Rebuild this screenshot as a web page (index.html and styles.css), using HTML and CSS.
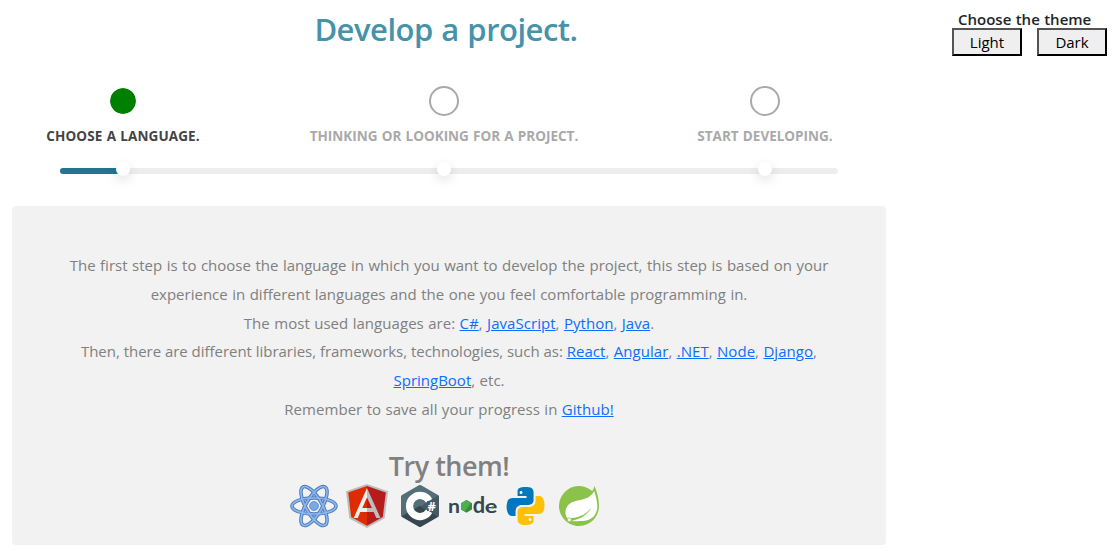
FILE: index.html
```html
<!DOCTYPE html>
<html lang="en">
<head>
<meta charset="utf-8">
<title>Develop a project</title>
<link rel="stylesheet" href="styles.css">
</head>
<body>
<main class="main">
  <h1 class="title"><span>Develop a project.</span></h1>
  <section class="stepper">
    <div class="track"><div class="fill"></div></div>
    <div class="step active"><i class="circle"></i><span class="label">CHOOSE A LANGUAGE.</span><i class="dot"></i></div>
    <div class="step"><i class="circle"></i><span class="label">THINKING OR LOOKING FOR A PROJECT.</span><i class="dot"></i></div>
    <div class="step"><i class="circle"></i><span class="label">START DEVELOPING.</span><i class="dot"></i></div>
  </section>
  <section class="panel">
    <p class="copy">
      <span class="wide">The first step is to choose the language in which you want to develop the project, this step is based on your</span><br>
      <span class="wide">experience in different languages and the one you feel comfortable programming in.</span><br>
      <span class="links">The most used languages are: <a href="#">C#</a>, <a href="#">JavaScript</a>, <a href="#">Python</a>, <a href="#">Java</a>.</span><br>
      <span class="tight">Then, there are different libraries, frameworks, technologies, such as: <span class="links"><a href="#">React</a>, <a href="#">Angular</a>, <a href="#">.NET</a>, <a href="#">Node</a>, <a href="#">Django</a>,</span></span><br>
      <span class="wide"><a href="#">SpringBoot</a>, etc.</span><br>
      <span class="links">Remember to save all your progress in <a href="#">Github!</a></span>
    </p>
    <h3 class="try"><span>Try them!</span></h3>
    <div class="icons">
      <svg viewBox="0 0 48 48"><g fill="none" stroke="#4e7ab5" stroke-width="3.6"><ellipse cx="24" cy="24" rx="22" ry="8"/><ellipse cx="24" cy="24" rx="22" ry="8" transform="rotate(60 24 24)"/><ellipse cx="24" cy="24" rx="22" ry="8" transform="rotate(120 24 24)"/></g><g fill="none" stroke="#8bb7f0" stroke-width="1.7"><ellipse cx="24" cy="24" rx="22" ry="8"/><ellipse cx="24" cy="24" rx="22" ry="8" transform="rotate(60 24 24)"/><ellipse cx="24" cy="24" rx="22" ry="8" transform="rotate(120 24 24)"/></g><circle cx="24" cy="24" r="4.5" fill="#7ba8e4" stroke="#5b88c6" stroke-width=".8"/></svg>
      <svg viewBox="0 0 48 48"><path fill="#bdbdbd" d="M23.9 2 3 9.3 6.3 36.4 24 46 41.7 36.3 45 9.2z"/><path fill="#b71c1c" d="M42.8 10.5 24 4.1V43.7L39.8 35z"/><path fill="#dd2c00" d="M24 4.1 5.2 10.6 8.2 35.1 24 43.7z"/><path fill="#bdbdbd" d="M24 6v9.5L28.9 26H24v4h6.7l2.6 6h4.2z"/><path fill="#eee" d="M24 26h-4.7L24 15.5V6L10.7 36h4l2.6-6H24z"/></svg>
      <svg viewBox="0 0 48 48"><path fill="#546e7a" d="M22.9 3.3a2.2 2.2 0 0 1 2.2 0L42 13q1 .6 1 1.9L24 24 5.5 34.5 5 33V15q0-1.400 1-2z"/><path fill="#37474f" d="m5.300 34.200 18.700-10.700 18.700 10.700-.7.900-16.900 9.600a2.200 2.200 0 0 1-2.200 0L6 35z"/><path fill="#455a64" d="M42.500 13.500q.5.600.5 1.500v18q0 .7-.5 1.500L24 24z"/><path d="M33.100 29.300A10.500 10.500 0 1 1 33.100 18.700" fill="none" stroke="#fff" stroke-width="7.200"/><path fill="#455a64" d="M31 19h12v10H31z"/><text class="sharp" x="31.600" y="28.700" textLength="9">#</text></svg>
      <svg viewBox="0 0 48 48"><text class="node" x="-1" y="30.500" textLength="12" lengthAdjust="spacingAndGlyphs">n</text><path fill="#388e3c" d="m17.500 18 5.500 3.200v6.300l-5.500 3.200-5.500-3.200v-6.300z"/><path fill="#4caf50" d="m17.500 18 4.500 2.600-6.400 9L12 27.500v-6.300z"/><text class="node d" x="23.800" y="30.500" textLength="12.400" lengthAdjust="spacingAndGlyphs">d</text><text class="node" x="35.700" y="30.500" textLength="12.600" lengthAdjust="spacingAndGlyphs">e</text><circle cx="43.700" cy="25.400" r="1.200" fill="#388e3c"/></svg>
      <svg viewBox="0 0 48 48"><path fill="#0277bd" d="M24.047,5c-1.555,0.005-2.633,0.142-3.936,0.367c-3.848,0.67-4.549,2.077-4.549,4.670V14h9v2H15.220h-4.350c-2.636,0-4.943,1.242-5.674,4.219c-0.826,3.417-0.863,5.557,0,9.125C5.851,32.005,7.294,34,9.931,34h3.632v-5.104c0-2.966,2.686-5.896,5.764-5.896h7.236c2.523,0,5-1.862,5-4.377v-8.586c0-2.439-1.759-4.263-4.218-4.672C27.406,5.359,25.589,4.994,24.047,5z M19.063,9c0.821,0,1.500,0.677,1.500,1.502c0,0.833-0.679,1.498-1.500,1.498c-0.837,0-1.500-0.664-1.500-1.498C17.563,9.680,18.226,9,19.063,9z"/><path fill="#ffc107" d="M23.078,43c1.555-0.005,2.633-0.142,3.936-0.367c3.848-0.670,4.549-2.077,4.549-4.670V34h-9v-2h9.343h4.350c2.636,0,4.943-1.242,5.674-4.219c0.826-3.417,0.863-5.557,0-9.125C41.274,15.995,39.831,14,37.194,14h-3.632v5.104c0,2.966-2.686,5.896-5.764,5.896h-7.236c-2.523,0-5,1.862-5,4.377v8.586c0,2.439,1.759,4.263,4.218,4.672C19.719,42.641,21.536,43.006,23.078,43z M28.063,39c-0.821,0-1.500-0.677-1.500-1.502c0-0.833,0.679-1.498,1.500-1.498c0.837,0,1.500,0.664,1.500,1.498C29.563,38.320,28.899,39,28.063,39z"/></svg>
      <svg viewBox="0 0 48 48"><path fill="#8bc34a" d="M39.500 4c1 3 4.500 10 4.500 20A20 20 0 1 1 37.200 9q1.500-2.200 2.300-5z"/><path fill="#fff" d="M39.200 9c1.800 6 4.600 14.500 2.300 20.500C39.300 36 34 38.600 27.500 39c-4.500.2-8 .2-11.500-.1 9-1.700 16.500-5.400 20.500-13.700C31 33 23 36.200 12.500 36.300 9 32 10 25 15 21.500c5-3.700 13-3 18.500-6.300q4-2.400 5.700-6.200z"/><circle cx="14.300" cy="37.700" r="2" fill="#fff" stroke="#8bc34a" stroke-width=".7"/></svg>
    </div>
  </section>
</main>
<aside class="theme">
  <div class="theme-title"><span>Choose the theme</span></div>
  <div class="buttons"><button>Light</button><button>Dark</button></div>
</aside>
</body>
</html>
```
FILE: styles.css
```css
* { box-sizing: border-box; }
body { margin: 0; width: 1112px; height: 551px; overflow: hidden; display: flex; background: #fff; font-family: "Open Sans", "Noto Sans", sans-serif; font-size: 15px; color: #212529; }
.main { width: 892px; flex: none; }
.title { margin: 0; padding-top: 8px; height: 86px; text-align: center; font-size: 31px; line-height: 43px; font-weight: 600; letter-spacing: -.5px; word-spacing: 1px; color: #4692ab; white-space: nowrap; }
.stepper { position: relative; width: 888px; height: 120px; display: grid; grid-template-columns: 246px 1fr 246px; }
.track { position: absolute; left: 60px; top: 82px; width: 778px; height: 6px; border-radius: 3px; background: #ededed; overflow: hidden; }
.fill { width: 63px; height: 6px; background: #21758f; }
.step { position: relative; display: flex; flex-direction: column; align-items: center; }
.circle { width: 30px; height: 30px; border: 2px solid #a9a9a9; border-radius: 50%; }
.active .circle { border-color: #fff; background: #008000; background-clip: padding-box; }
.label { margin-top: 10px; height: 20px; line-height: 20px; font-size: 13.5px; letter-spacing: 0; word-spacing: .7px; font-weight: 700; color: #a9a9a9; white-space: nowrap; }
.active .label { color: #444; letter-spacing: .1px; }
.dot { width: 14px; height: 14px; margin-top: 16px; border-radius: 50%; background: #fff; box-shadow: 0 4px 12px rgba(0, 0, 0, .13); }
.panel { margin-left: 12px; width: 874px; height: 339px; padding-top: 45px; border-radius: 4px; background: #f2f2f2; text-align: center; }
.copy { margin: 0; height: 197px; line-height: 28.8px; color: #808080; white-space: nowrap; }
.copy a { color: #0d6efd; text-decoration: underline; }
.wide { word-spacing: .6px; }
.links { word-spacing: .4px; letter-spacing: .05px; }
.tight { letter-spacing: -.03px; }
.try { margin: 0; height: 34px; line-height: 36px; font-size: 27px; font-weight: 600; color: #808080; letter-spacing: -.5px; }
.icons { display: flex; justify-content: center; gap: 5px; margin-left: -5px; }
.icons svg { width: 48px; height: 48px; }
.sharp { font: 700 13px "Open Sans", sans-serif; fill: #fff; }
.node { font: 700 19px Lato, sans-serif; fill: #37474f; }
.node.d { font-size: 23px; }
.theme { flex: none; margin-left: 60px; width: 155px; padding-top: 10px; }
.theme-title { height: 18px; line-height: 18px; padding-left: 6px; font-size: 15px; font-weight: 600; word-spacing: .5px; white-space: nowrap; }
.buttons { display: flex; gap: 15px; }
.buttons button { width: 70px; height: 28px; padding: 0; border: 2px outset #000; border-radius: 0; background: #efefef; font: 15px "Open Sans", sans-serif; color: #000; }
```
